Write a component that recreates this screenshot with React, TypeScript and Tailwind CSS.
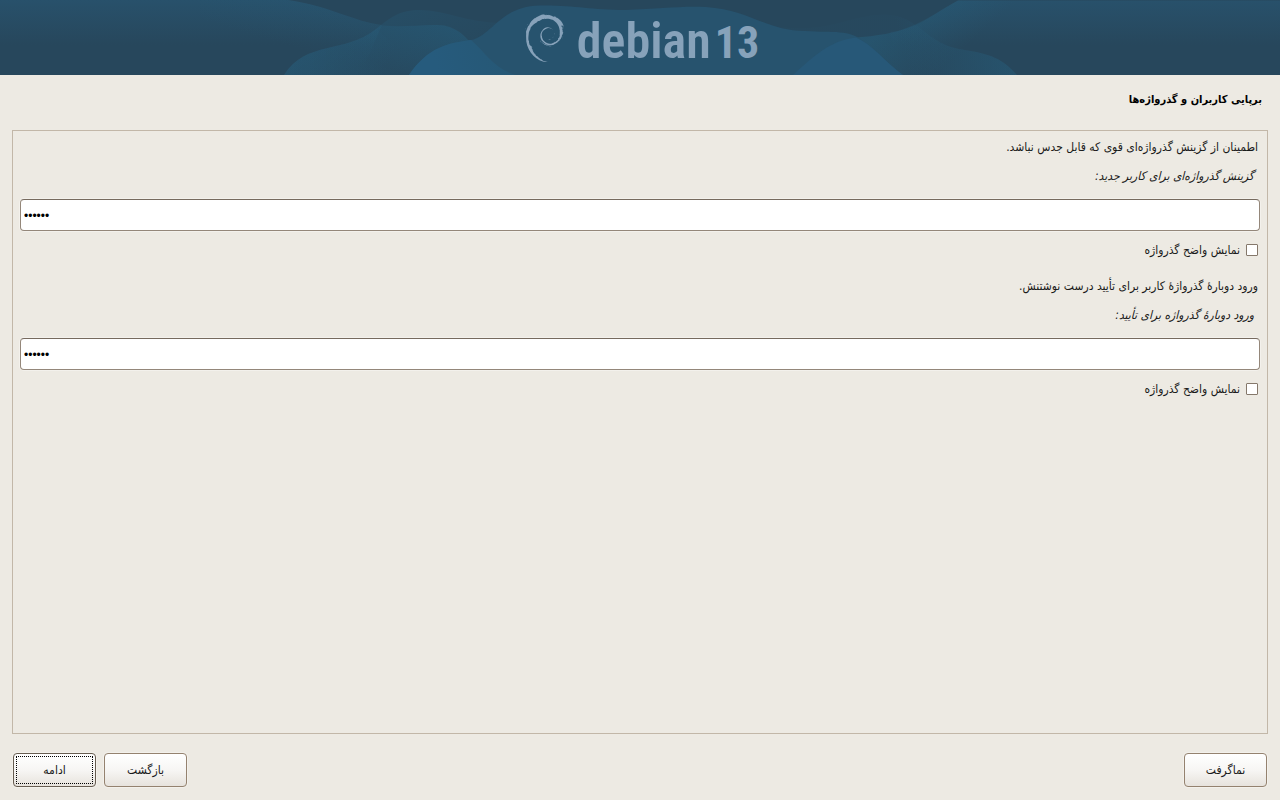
import { useState } from "react";
import { SiDebian } from "react-icons/si";

function Waves() {
  return (
    <svg
      className="absolute inset-0 h-full w-full"
      viewBox="0 0 1280 75"
      preserveAspectRatio="none"
      aria-hidden="true"
    >
      <defs>
        <linearGradient id="side" x1="0" y1="0" x2="0" y2="1">
          <stop offset="0" stopColor="#28516b" />
          <stop offset="0.6" stopColor="#27475c" />
        </linearGradient>
        <linearGradient id="leftSlope" gradientUnits="userSpaceOnUse" x1="350" y1="10" x2="335" y2="60">
          <stop offset="0" stopColor="#265f7c" stopOpacity="0.2" />
          <stop offset="1" stopColor="#265f7c" stopOpacity="0" />
        </linearGradient>
        <linearGradient id="leftCrest" gradientUnits="userSpaceOnUse" x1="430" y1="20" x2="405" y2="75">
          <stop offset="0" stopColor="#265d7b" stopOpacity="0.5" />
          <stop offset="1" stopColor="#265d7b" stopOpacity="0.05" />
        </linearGradient>
        <linearGradient id="back" gradientUnits="userSpaceOnUse" x1="400" y1="10" x2="430" y2="75">
          <stop offset="0" stopColor="#26607f" stopOpacity="0.25" />
          <stop offset="1" stopColor="#26607f" stopOpacity="0.05" />
        </linearGradient>
        <linearGradient id="backLeft" gradientUnits="userSpaceOnUse" x1="290" y1="40" x2="385" y2="75">
          <stop offset="0" stopColor="#26607f" stopOpacity="0.35" />
          <stop offset="1" stopColor="#26607f" stopOpacity="0" />
        </linearGradient>
        <linearGradient id="backRight" gradientUnits="userSpaceOnUse" x1="1000" y1="50" x2="910" y2="75">
          <stop offset="0" stopColor="#26607f" stopOpacity="0.4" />
          <stop offset="1" stopColor="#26607f" stopOpacity="0" />
        </linearGradient>
        <linearGradient id="rightCrest" gradientUnits="userSpaceOnUse" x1="900" y1="15" x2="945" y2="65">
          <stop offset="0" stopColor="#265f7c" stopOpacity="0.5" />
          <stop offset="1" stopColor="#265f7c" stopOpacity="0" />
        </linearGradient>
        <linearGradient id="blueLeft" gradientUnits="userSpaceOnUse" x1="440" y1="75" x2="500" y2="50">
          <stop offset="0" stopColor="#265b7d" />
          <stop offset="1" stopColor="#265876" />
        </linearGradient>
      </defs>
      <rect width="1280" height="75" fill="#27475c" />
      <path d="M0 0H288C330 6 355 22 382 25L360 75H0Z" fill="url(#side)" />
      <path d="M200 0H288C330 6 355 22 382 25L360 75H200Z" fill="url(#leftSlope)" />
      <path
        d="M284 75C306 40 345 54 376 29L382 25.500C404 27.500 420 24.500 438 25C475 26 475 70 516 75Z"
        fill="url(#leftCrest)"
      />
      <path d="M284 75C306 40 345 54 376 29C391 17 400 10 420 10C445 10 467 23 505 23L480 75Z" fill="url(#back)" />
      <path d="M284 75C306 40 345 54 376 29L430 75Z" fill="url(#backLeft)" />
      <path d="M958 0.500H1280V75H900L890 32C920 29 930 15 958 0.500Z" fill="url(#side)" />
      <path d="M958 0.500H1040V75H793C812 58 830 38 862 37C910 33 922 21 958 0.500Z" fill="url(#rightCrest)" />
      <path d="M780 27C832 33 852 14 885 14.500C920 15 925 45 965 50C990 54 1002 58 1017 75H840Z" fill="url(#back)" />
      <path d="M780 27C832 33 852 14 885 14.500C920 15 925 45 965 50C990 54 1002 58 1017 75H840Z" fill="url(#backRight)" />
      <path
        d="M409 75C428 47 448 43 471 40C492 36 500 6 540 5.500C575 5 590 10 625 10C660 9 678 6 706 7C750 10 767 31 805 31C835 33 848 29 865 42C877 51 887 64 903 75Z"
        fill="#27536e"
      />
      <path d="M409 75C428 47 448 43 471 40C486 53 494 69 516 75Z" fill="url(#blueLeft)" />
      <path d="M793 75C812 58 830 40 856 37.500C873 45 884 61 903 75Z" fill="#275878" />
    </svg>
  );
}

function Banner() {
  return (
    <header dir="ltr" className="relative flex h-[75px] shrink-0 items-center justify-center overflow-hidden bg-[#27475c]">
      <Waves />
      <div className="relative flex items-center text-[#87a2ba]">
        <SiDebian className="h-12 w-12" aria-hidden="true" />
        <span className="mt-2 ml-2 flex items-baseline gap-1 font-['Roboto_Condensed','Noto_Sans_CJK_SC',sans-serif] leading-12">
          <span className="text-[50px] font-semibold">debian</span>
          <span className="text-[44px] font-bold">13</span>
        </span>
      </div>
    </header>
  );
}

type PasswordFieldProps = {
  id: string;
  description: string;
  label: string;
};

function PasswordField({ id, description, label }: PasswordFieldProps) {
  const [value, setValue] = useState("secret");
  const [visible, setVisible] = useState(false);

  return (
    <section className="flex flex-col">
      <p className="leading-5">{description}</p>
      <label htmlFor={id} className="mt-[7px] pr-1 leading-6 italic">
        {label}
      </label>
      <input
        id={id}
        dir="ltr"
        type={visible ? "text" : "password"}
        value={value}
        onChange={(event) => setValue(event.target.value)}
        className="-mx-[2px] mt-[11px] h-8 rounded-[4px] border border-[#94877a] border-t-[#766a5e] bg-white px-[3px] pt-[2px] text-left font-['Liberation_Sans',sans-serif] text-xs text-black shadow-[0_0_0_1px_#f3f1ec] outline-none"
      />
      <label className="mt-[7px] flex items-center gap-1.5 self-start leading-6">
        <input
          type="checkbox"
          checked={visible}
          onChange={(event) => setVisible(event.target.checked)}
          className="h-3 w-3 appearance-none rounded-[1px] border border-[#85786b] bg-white checked:bg-[#85786b]"
        />
        نمایش واضح گذرواژه
      </label>
    </section>
  );
}

const buttonClass =
  "h-[34px] w-[83px] rounded-[4px] border border-[#94826f] bg-linear-to-b from-white via-[#f7f6f4] to-[#e7e3dd] shadow-[0_0_0_1px_#f3f1ec]";

export default function App() {
  return (
    <div
      dir="rtl"
      lang="fa"
      className="flex min-h-screen flex-col bg-[#edeae3] font-['DejaVu_Sans_Condensed','DejaVu_Sans',sans-serif] text-xs text-[#1a1a1a]"
    >
      <Banner />
      <h1 className="px-[18px] pt-[13px] text-[11px] leading-6 font-bold text-black">برپایی کاربران و گذرواژه‌ها</h1>
      <main className="mx-3 mt-[18px] flex flex-1 flex-col gap-[14px] border border-[#c2b7a8] px-[9px] pt-[6px]">
        <PasswordField
          id="password"
          description="اطمینان از گزینش گذرواژه‌ای قوی که قابل جدس نباشد."
          label="گزینش گذرواژه‌ای برای کاربر جدید:"
        />
        <PasswordField
          id="password-again"
          description="ورود دوبارهٔ گذرواژهٔ کاربر برای تأیید درست نوشتنش."
          label="ورود دوبارهٔ گذرواژه برای تأیید:"
        />
      </main>
      <footer className="flex items-center gap-2 px-[13px] pt-[19px] pb-[13px]">
        <button type="button" className={buttonClass}>
          نماگرفت
        </button>
        <div className="flex-1" />
        <button type="button" className={buttonClass}>
          بازگشت
        </button>
        <button
          type="button"
          className="h-[34px] w-[83px] rounded-[4px] border border-[#665c50] bg-linear-to-b from-white via-[#f7f6f4] to-[#e7e3dd] p-[2px] shadow-[0_0_0_1px_#f3f1ec]"
        >
          <span className="flex h-full items-center justify-center border border-dotted border-black">ادامه</span>
        </button>
      </footer>
    </div>
  );
}
